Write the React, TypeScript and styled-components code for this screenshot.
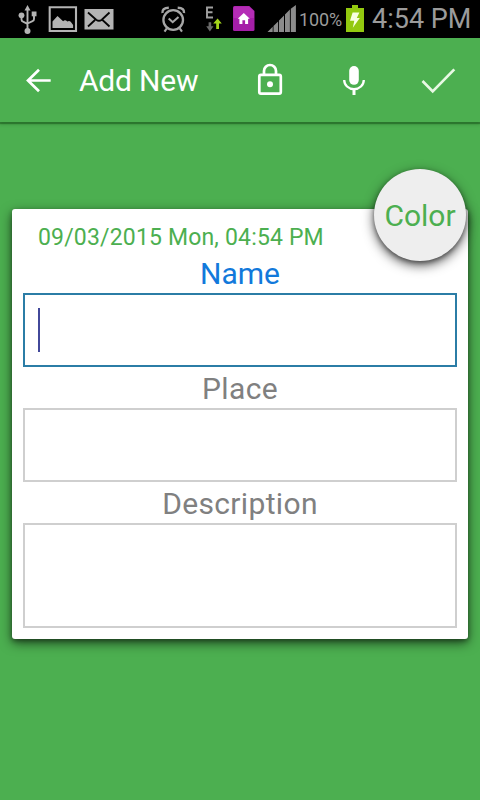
import React, { useState } from "react";
import styled, { createGlobalStyle } from "styled-components";

const GlobalStyle = createGlobalStyle`
  * { box-sizing: border-box; }
  body { margin: 0; background: #4caf50; font-family: Roboto, sans-serif; }
`;

const Screen = styled.div`
  display: flex;
  flex-direction: column;
  width: 480px;
  height: 800px;
  background: #4caf50;
  overflow: hidden;
`;

const StatusBar = styled.div`
  display: flex;
  flex: none;
  height: 38px;
  background: #000;
  color: #9b9b9b;
`;

const StatusIcon = styled.svg<{ $gap?: number }>`
  display: block;
  flex: none;
  height: 38px;
  margin-left: ${(p) => p.$gap ?? 0}px;
`;

const BatteryLevel = styled.span`
  width: 47px;
  padding-left: 2px;
  font-size: 18px;
  line-height: 40px;
  letter-spacing: -0.15px;
  white-space: nowrap;
`;

const Clock = styled.span`
  margin-left: 8px;
  font-size: 27px;
  line-height: 38px;
  white-space: nowrap;
`;

const AppBar = styled.header`
  display: flex;
  flex: none;
  align-items: center;
  height: 84px;
  padding: 0 22px 0 20px;
  color: #fff;
  box-shadow: 0 2px 1px rgba(0, 40, 0, 0.33), 0 3px 3px rgba(0, 40, 0, 0.15);
`;

const IconButton = styled.button<{ $gap?: number }>`
  display: flex;
  flex: none;
  margin: 0 0 0 ${(p) => p.$gap ?? 0}px;
  padding: 0;
  border: 0;
  background: none;
  color: inherit;
`;

const Title = styled.h1`
  flex: 1;
  margin: 0 0 0 23px;
  padding-top: 2px;
  font-size: 30px;
  font-weight: 400;
  line-height: 40px;
  letter-spacing: -0.2px;
  white-space: nowrap;
`;

const Card = styled.form`
  position: relative;
  display: flex;
  flex-direction: column;
  height: 430px;
  margin: 87px 12px 0;
  padding: 8px 11px 11px;
  border-radius: 3px;
  background: #fff;
  box-shadow: 0 4px 12px rgba(0, 0, 0, 0.6), 0 2px 4px rgba(0, 0, 0, 0.3);
`;

const DateText = styled.div`
  height: 35px;
  padding-left: 15px;
  color: #4caf50;
  font-size: 23px;
  line-height: 42px;
  letter-spacing: 0.17px;
  white-space: nowrap;
`;

const Field = styled.label`
  display: block;
`;

const FieldLabel = styled.span<{ $focused: boolean }>`
  display: block;
  height: 41px;
  color: ${(p) => (p.$focused ? "#1279db" : "#808080")};
  font-size: 30px;
  line-height: 43px;
  letter-spacing: ${(p) => (p.$focused ? 0 : 0.35)}px;
  text-align: center;
`;

const FieldBox = styled.span<{ $focused: boolean; $height: number }>`
  display: flex;
  align-items: center;
  height: ${(p) => p.$height}px;
  padding-left: 13px;
  border: 2px solid ${(p) => (p.$focused ? "#2b7da6" : "#cfcfcf")};
`;

const Caret = styled.span`
  width: 2px;
  height: 44px;
  background: #42489a;
`;

const ColorButton = styled.button`
  position: absolute;
  top: -40px;
  right: 2px;
  width: 92px;
  height: 92px;
  padding: 0;
  border: 0;
  border-radius: 50%;
  background: #eee;
  color: #4caf50;
  font: 400 30px Roboto, sans-serif;
  box-shadow: 0 4px 12px rgba(0, 0, 0, 0.68), 0 2px 4px rgba(0, 0, 0, 0.35);
`;

const fields = [
  { name: "Name", height: 74 },
  { name: "Place", height: 74 },
  { name: "Description", height: 105 },
];

const StatusIcons = () => (
  <>
    <StatusIcon $gap={18} width="20" viewBox="18 0 20 38" fill="#b4b4b4" stroke="#b4b4b4">
      <path d="M27.5 5l3 5.5h-6z" stroke="none" />
      <path d="M27.5 9v22M21.5 16v3.5q0 1.7 1.5 2.2l4.5 2.2M34 15v4q0 1.7-1.5 2.2L27.5 23.5" fill="none" strokeWidth="1.9" />
      <circle cx="21.5" cy="15.3" r="2.9" stroke="none" />
      <path d="M31.7 11.5h4.8v4.8h-4.8z" stroke="none" />
      <circle cx="27.5" cy="31" r="3" stroke="none" />
    </StatusIcon>
    <StatusIcon $gap={10} width="30" viewBox="48 0 30 38" fill="#b4b4b4">
      <path d="M49.7 7.2h26.3v23.8H49.7z" fill="none" stroke="#b4b4b4" strokeWidth="2.1" />
      <path d="M52.5 28v-6.5l5-5.6 5.6 5.3q2-2 4.2.3 2.2-1.3 3.6.6l2.2 2.9v3z" />
    </StatusIcon>
    <StatusIcon $gap={6} width="30" viewBox="84 0 30 38">
      <path d="M84.5 9h29v20.5h-29z" fill="#b4b4b4" />
      <path d="M88 12.5l8.2 7.2q2.8 2.2 5.6 0l7.7-7.2M88 26.5l7-6.5M109.5 26.5l-7-6.5" fill="none" stroke="#050505" strokeWidth="1.8" />
    </StatusIcon>
    <StatusIcon $gap={46} width="27" viewBox="160 0 27 38" fill="none" stroke="#a6a6a6">
      <circle cx="173.2" cy="20" r="9.8" strokeWidth="2.3" />
      <path d="M168.7 18.5l4 3.7 5.8-5.2M166.8 28.3l-2.3 3.4M179.7 28.3l2.3 3.4" strokeWidth="2.1" />
      <path d="M162.5 13q-.8-5 6.3-5.2M184 13q.8-5-6.3-5.2" strokeWidth="2.5" />
    </StatusIcon>
    <StatusIcon $gap={17} width="19" viewBox="204 0 19 38">
      <path d="M213 7.5h-6v10h6M207 12.3h5.5" fill="none" stroke="#a0a0a0" strokeWidth="1.9" />
      <path d="M208.6 22.2h2.6v4.1h2.3l-3.6 5.2-3.7-5.2h2.4z" fill="#6a6a6a" />
      <path d="M216.2 29v-5.5h-3l4.4-5 4.2 5h-2.8V29z" fill="#a4d51a" />
    </StatusIcon>
    <StatusIcon $gap={10} width="22" viewBox="233 0 22 38">
      <path d="M234.5 6h14.8l5.2 5v18.5q0 1.5-1.5 1.5h-18.5q-1.5 0-1.5-1.5V7.5q0-1.5 1.5-1.5z" fill="#a51fa8" />
      <path d="M233.5 8q0-1.5 1.5-1.5h14l5 4.8v6.7h-20.5z" fill="#bd35bd" opacity=".65" />
      <path d="M243.8 13l6 5.8h-1.7V24h-3v-3.8h-2.7V24h-3v-5.2h-1.7z" fill="#fff" />
    </StatusIcon>
    <StatusIcon $gap={12} width="30" viewBox="267 0 30 38" fill="#8b8b8b">
      <path d="M267.5 32l5.2-5.2V32zM273.5 26l4.6-4.6V32h-4.6zM279 20.5l5-5V32h-5zM285 14.5l4.9-4.9V32H285zM290.8 8.7l5.1-3.7v27h-5.1z" />
    </StatusIcon>
  </>
);

const BatteryIcon = () => (
  <StatusIcon $gap={2} width="18" viewBox="346 0 18 38">
    <path d="M352 5h6v3h6v24h-18V8h6z" fill="#93c90f" />
    <path d="M352.6 12.5h6.8l-2.6 5.5h3l-7 9.8 1.5-7H350z" fill="#f8ffe0" />
  </StatusIcon>
);

export default function App() {
  const [focused, setFocused] = useState("Name");

  return (
    <Screen>
      <GlobalStyle />
      <StatusBar>
        <StatusIcons />
        <BatteryLevel>100%</BatteryLevel>
        <BatteryIcon />
        <Clock>4:54 PM</Clock>
      </StatusBar>
      <AppBar>
        <IconButton aria-label="Back">
          <svg width="36" height="36" viewBox="20 62 36 36" fill="none" stroke="currentColor" strokeWidth="2.7">
            <path d="M50.7 80.5H28M39 69.8L28 80.5l11 10.8" />
          </svg>
        </IconButton>
        <Title>Add New</Title>
        <IconButton aria-label="Lock">
          <svg width="36" height="36" viewBox="252 62 36 36" fill="none" stroke="currentColor" strokeWidth="2.7">
            <rect x="259.3" y="74.8" width="21.5" height="18.9" rx="1.6" />
            <path d="M264 74.5v-3.5a6 6 0 0 1 12 0v3.5" />
            <circle cx="270" cy="84.3" r="3" fill="currentColor" stroke="none" />
          </svg>
        </IconButton>
        <IconButton aria-label="Record" $gap={48}>
          <svg width="36" height="36" viewBox="336 62 36 36" fill="none" stroke="currentColor" strokeWidth="2.3">
            <rect x="349.2" y="66" width="9.6" height="18.8" rx="4.8" fill="currentColor" stroke="none" />
            <path d="M344.2 80a9.8 9.2 0 0 0 19.6 0" />
            <path d="M354 89v6" strokeWidth="3" />
          </svg>
        </IconButton>
        <IconButton aria-label="Save" $gap={48}>
          <svg width="38" height="36" viewBox="420 62 38 36" fill="none" stroke="#e8f9e4" strokeWidth="2.7">
            <path d="M422.5 81l10.2 10.4 21.6-22" />
          </svg>
        </IconButton>
      </AppBar>
      <Card>
        <DateText>09/03/2015 Mon, 04:54 PM</DateText>
        {fields.map(({ name, height }) => (
          <Field key={name} onClick={() => setFocused(name)}>
            <FieldLabel $focused={focused === name}>{name}</FieldLabel>
            <FieldBox $focused={focused === name} $height={height}>
              {focused === name && <Caret />}
            </FieldBox>
          </Field>
        ))}
        <ColorButton type="button">Color</ColorButton>
      </Card>
    </Screen>
  );
}
